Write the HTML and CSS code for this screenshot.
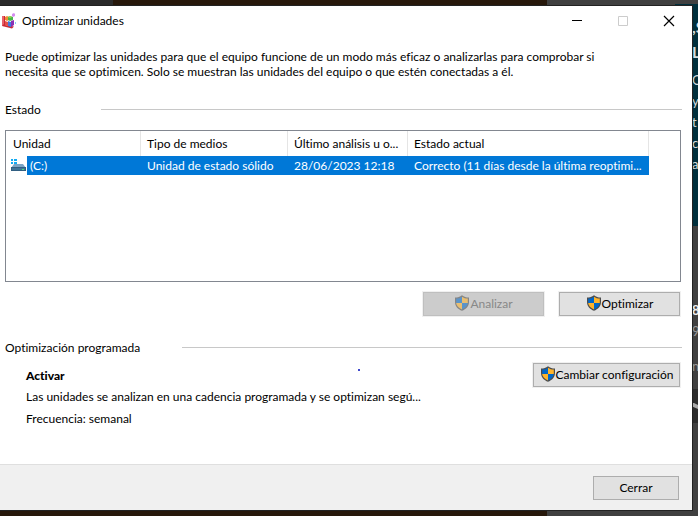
FILE: index.html
```html
<!DOCTYPE html>
<html lang="es">
<head>
<meta charset="utf-8">
<title>Optimizar unidades</title>
<link rel="stylesheet" href="styles.css">
</head>
<body>
<svg width="0" height="0" class="defs" aria-hidden="true">
  <symbol id="shield" viewBox="0 0 16 16">
    <path d="M8 0.3C6 2 3.8 2.6 1 2.6V7c0 4.4 3 7.2 7 8.8 4-1.600 7-4.400 7-8.800V2.600C12.200 2.600 10 2 8 0.300z" fill="#4c4c4c"/>
    <path d="M8 1.700C6.200 3 4.400 3.500 2.200 3.600V8H8z" fill="#0067c8"/>
    <path d="M8 1.700C9.800 3 11.600 3.500 13.800 3.600V8H8z" fill="#ffb42a"/>
    <path d="M2.200 8H8v6.500C4.800 13.100 2.400 11 2.200 8z" fill="#ffb42a"/>
    <path d="M13.800 8H8v6.500c3.200-1.400 5.600-3.500 5.800-6.500z" fill="#0067c8"/>
  </symbol>
</svg>
<aside class="behind" aria-hidden="true">
  <div class="teal"><b>,S</b><b>L</b><span>Or</span><span>y</span><span>t</span><span>c</span><span>a</span></div>
  <div class="gray"><b>8</b><span>9</span><span class="low">n</span><div class="band"><svg viewBox="0 0 7 8" width="7" height="8"><path d="M0 1h3l4 2v4L0 4z" fill="#aaa"/></svg></div></div>
</aside>
<main class="window">
  <header class="titlebar">
    <svg class="app-icon" viewBox="0 0 16 16" width="16" height="16" aria-hidden="true">
      <path d="M1 3l3 0v9l9 1.500-2 2L1 13z" fill="#c92a35"/>
      <path d="M1 3l2 0v8l-2 2z" fill="#e8616a"/>
      <path d="M4 4l2-1 2 1v3L6 8 4 7z" fill="#ef8b35"/>
      <path d="M7 4l2-1 3 1v3L9 8 7 7z" fill="#45b649"/>
      <path d="M4 8l3 1v4l-3-1z" fill="#e5504a"/>
      <path d="M7 8l3 1v5l-3-1z" fill="#3d7be0"/>
      <path d="M10 8l3-1v5l-3 2z" fill="#8b2fb4"/>
      <path d="M7 4l2-1 2 1-2 1z" fill="#a7d94f"/>
      <path d="M11 1l2-1 1 1v2l-2 1-1-1z" fill="#d58cf0"/>
      <path d="M14 9h1v2h-1z" fill="#7fd0f2"/>
    </svg>
    <h1>Optimizar unidades</h1>
    <button class="caption" aria-label="Minimizar"><svg viewBox="0 0 12 12" width="12" height="12"><path d="M1 5.500h10" stroke="#000"/></svg></button>
    <button class="caption" aria-label="Maximizar" disabled><svg viewBox="0 0 12 12" width="12" height="12"><path d="M1.500 1.500h9v9h-9z" fill="none" stroke="#ccc"/></svg></button>
    <button class="caption" aria-label="Cerrar ventana"><svg viewBox="0 0 12 12" width="12" height="12"><path d="M1 1l10 10M11 1L1 11" stroke="#000" stroke-width="1.200"/></svg></button>
  </header>
  <div class="content">
    <p class="intro">Puede optimizar las unidades para que el equipo funcione de un modo más eficaz o analizarlas para comprobar si necesita que se optimicen. Solo se muestran las unidades del equipo o que estén conectadas a él.</p>
    <h2 class="group status">Estado</h2>
    <div class="list">
      <table>
        <colgroup><col class="c1"><col class="c2"><col class="c3"><col class="c4"></colgroup>
        <thead><tr><th>Unidad</th><th>Tipo de medios</th><th>Último análisis u o...</th><th>Estado actual</th></tr></thead>
        <tbody><tr><td class="drive"><div><svg viewBox="0 0 16 16" width="16" height="16" aria-hidden="true">
          <path d="M1 1h2v2H1zM4 1h3v2H4zM1 4h2v2H1zM4 4h3v2H4z" fill="#12aaf2"/>
          <path d="M4 6h9l3 4H1z" fill="#7ba4c4"/><path d="M1 9h15v4H1z" fill="#315f82"/><path d="M2 10h13v2H2z" fill="#3f7397"/><path d="M12 11h2v1h-2z" fill="#48df7b"/>
        </svg><span>(C:)</span></div></td><td>Unidad de estado sólido</td><td>28/06/2023 12:18</td><td>Correcto (11 días desde la última reoptimi...</td></tr></tbody>
      </table>
    </div>
    <div class="actions">
      <button class="btn" disabled><svg width="16" height="16"><use href="#shield"/></svg>Analizar</button>
      <button class="btn"><svg width="16" height="16"><use href="#shield"/></svg>Optimizar</button>
    </div>
    <h2 class="group schedule">Optimización programada</h2>
    <section class="plan">
      <div class="details">
        <h3>Activar</h3>
        <p>Las unidades se analizan en una cadencia programada y se optimizan segú...</p>
        <p>Frecuencia: semanal</p>
        <i class="dot"></i>
      </div>
      <button class="btn wide"><svg width="16" height="16"><use href="#shield"/></svg>Cambiar configuración</button>
    </section>
  </div>
  <footer><button class="btn close">Cerrar</button></footer>
</main>
</body>
</html>
```
FILE: styles.css
```css
* { box-sizing: border-box; }
body {
  margin: 0;
  min-height: 100vh;
  padding: 6px 6px 6px 0;
  display: flex;
  overflow: hidden;
  background: linear-gradient(90deg, #2b2b2b 113px, transparent 113px) top / 100% 6px no-repeat,
    linear-gradient(90deg, #27180b 547px, #404040 547px);
  color: #000;
  font: 12px/15px Lato, sans-serif;
  font-variant-ligatures: none;
}
button, h1, h2, h3, p, table { font: inherit; font-variant-ligatures: inherit; margin: 0; }
svg { display: block; flex: none; }
.defs { position: absolute; }
.window {
  position: relative;
  flex: 1;
  display: flex;
  flex-direction: column;
  background: #fff;
  box-shadow: 0 0 0 1px #222;
}

/* Page visible behind the dialog */
.behind {
  position: absolute;
  top: 4px;
  right: 0;
  width: 23px;
  padding-left: 17px;
  overflow: hidden;
  background: #404040;
  color: #d5dcde;
  font-size: 13px;
  line-height: 21px;
}
.behind::before {
  content: "";
  position: absolute;
  inset: 0 0 auto;
  height: 222px;
  background: #002f3c;
}
.behind b, .behind span { display: block; }
.teal { position: relative; height: 222px; padding-top: 9px; }
.teal b { font-size: 16px; line-height: 27px; }
.teal b + b { line-height: 24px; margin-bottom: 6px; }
.gray { padding-top: 74px; color: #999; }
.gray b { color: #eee; }
.gray .low { padding-top: 14px; }
.band { height: 34px; margin: 12px 0 0 -17px; padding: 13px 0 0 16px; background: #2c2c2c; }

.titlebar { display: flex; align-items: center; height: 29px; padding-left: 1px; }
.titlebar h1 { flex: 1; padding-left: 5px; }
.caption {
  width: 46px;
  height: 28px;
  padding: 0;
  border: 0;
  background: none;
  display: grid;
  place-items: center;
}
.content { flex: 1; padding: 14px 12px 0 5px; }
.intro { max-width: 620px; }
.group { display: grid; align-items: center; }
.group::after { content: ""; height: 1px; margin-right: -2px; background: #c8c8c8; }
.status { grid-template-columns: 96px 1fr; margin: 23px 0 13px; }
.schedule { grid-template-columns: 177px 1fr; margin: 24px 0 14px; }
.list { height: 152px; margin-right: -1px; border: 1px solid #828790; overflow: hidden; }
table { table-layout: fixed; border-collapse: separate; border-spacing: 0; width: 643px; }
.c1 { width: 135px; }
.c2 { width: 147px; }
.c3 { width: 120px; }
th, td { padding: 0 0 0 6px; text-align: left; font-weight: 400; white-space: nowrap; }
th { height: 25px; border-right: 1px solid #e5e5e5; }
th:first-child { padding-left: 7px; }
td { height: 19px; background: #0078d7; color: #fff; }
.drive { padding: 0; background: #fff; }
.drive div { display: flex; height: 19px; padding-left: 4px; gap: 1px; align-items: center; }
.drive span { flex: 1; padding-left: 3px; line-height: 19px; background: #0078d7; }
.actions { display: flex; justify-content: flex-end; gap: 15px; padding-top: 10px; }
.btn {
  width: 121px;
  height: 24px;
  padding: 0 0 1px;
  border: 1px solid #adadad;
  background: #e1e1e1;
  box-shadow: 0 0 0 1px #f0f0f0;
  color: #000;
  display: flex;
  align-items: center;
  justify-content: center;
}
.btn:disabled { background: #ccc; border-color: #bfbfbf; color: #888; }
.btn:disabled svg { opacity: .55; }
.btn svg { margin-bottom: 2px; }
.plan { display: flex; justify-content: space-between; align-items: flex-start; margin-top: -6px; }
.details { position: relative; padding: 5px 0 0 21px; }
.details h3 { font-weight: 900; margin-bottom: 6px; }
.details p { margin-bottom: 7px; }
.wide { width: 147px; }
.dot { position: absolute; left: 353px; top: 6px; width: 2px; height: 2px; background: #3f48cc; }
footer { display: flex; justify-content: flex-end; height: 46px; padding: 11px 13px 0 0; border-top: 1px solid #dfdfdf; background: #f0f0f0; }
.close { width: 86px; }
```
